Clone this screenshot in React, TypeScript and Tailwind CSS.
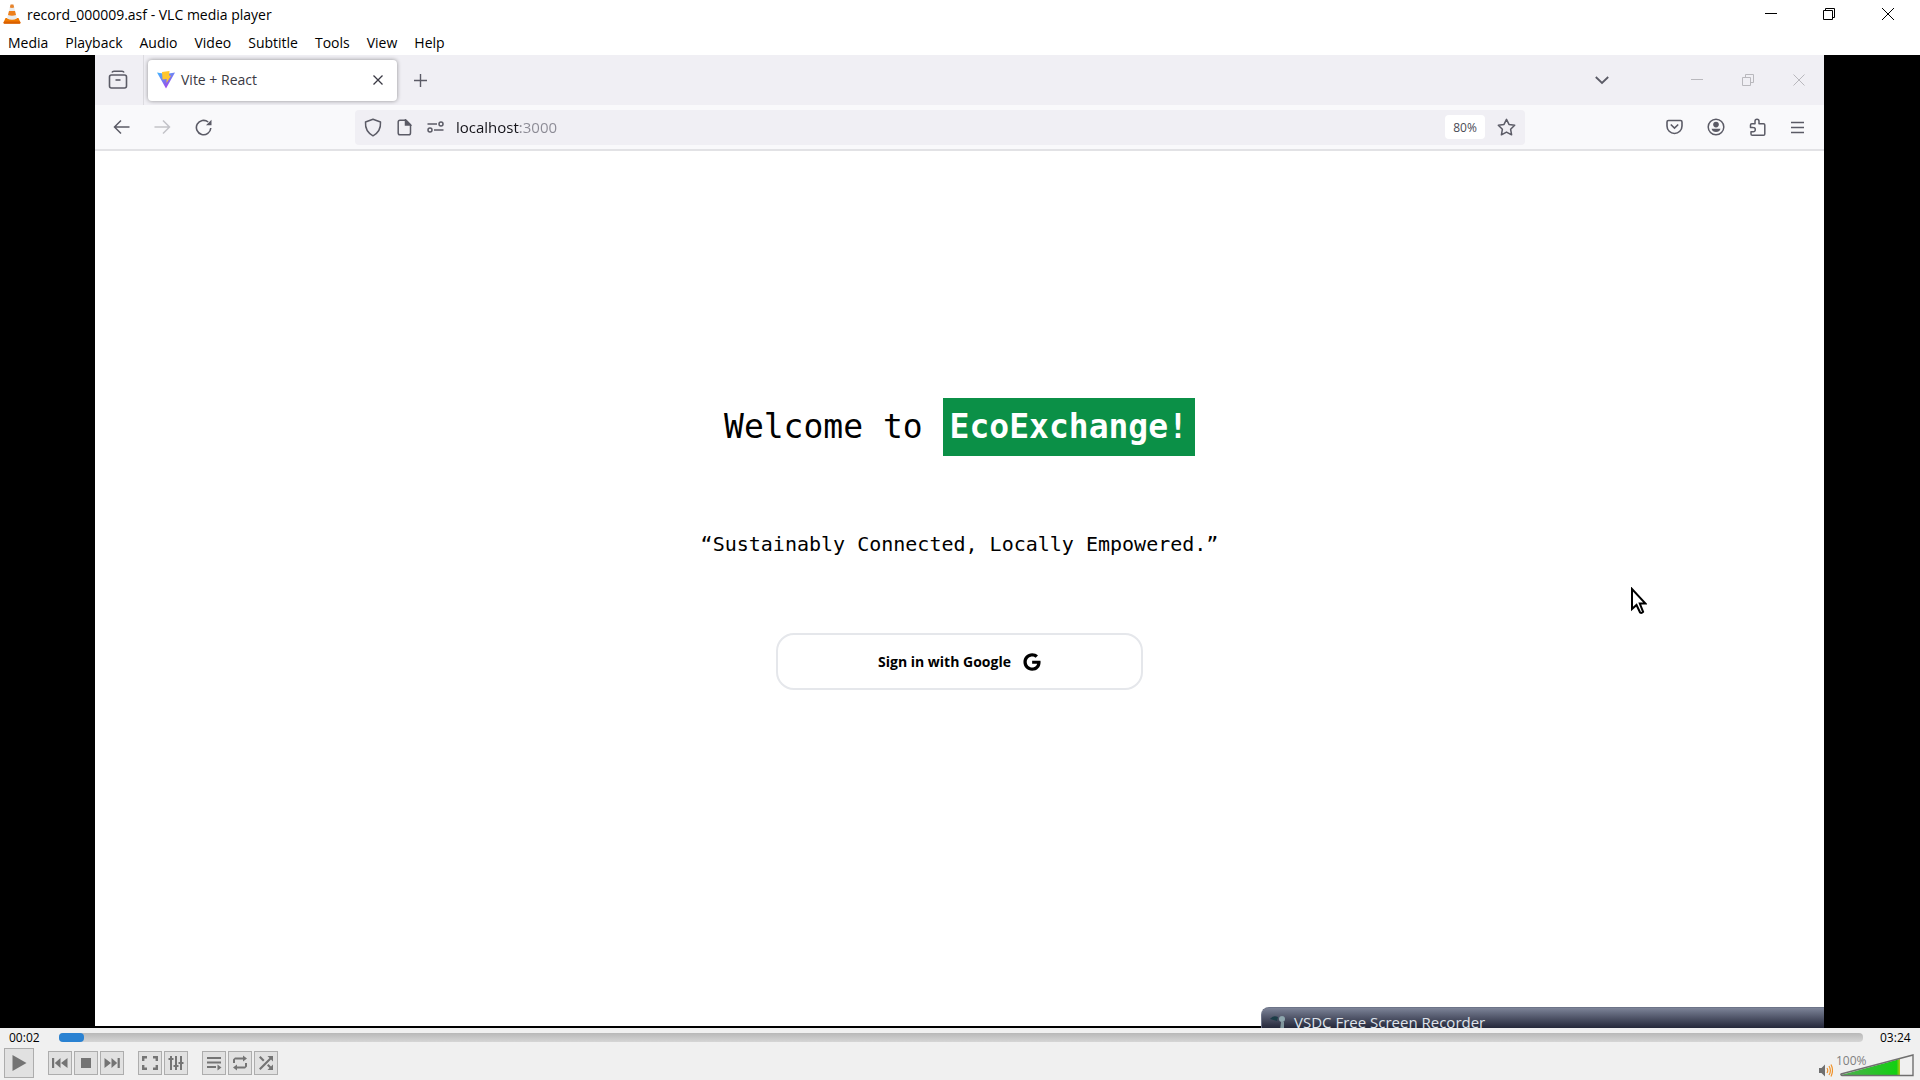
import React from "react";
import { FaGoogle } from "react-icons/fa";

interface ControlButtonProps {
  label: string;
  children: React.ReactNode;
}

const menuItems = [
  "Media",
  "Playback",
  "Audio",
  "Video",
  "Subtitle",
  "Tools",
  "View",
  "Help",
];

const VlcCone = () => (
  <svg width="18" height="20" viewBox="0 0 18 20">
    <path d="M2.5 14h13l2 4.5q0 1-1 1h-15q-1 0-1-1z" fill="#f07a00" />
    <path d="M1 17.5h16l.6 1.4-.8.8H1.2l-.8-.8z" fill="#d95f00" />
    <path d="M7.6.6h2.8L14 14.5q-5 2.5-10 0z" fill="#e9ecee" />
    <path d="M7.6.6h2.8l.8 3q-2.2.8-4.400 0z" fill="#e8852c" />
    <path d="M6 7h6l1 4q-4 1.6-8 0z" fill="#ee7f1a" />
  </svg>
);

const ViteLogo = () => (
  <svg width="18" height="18" viewBox="0 0 18 18">
    <defs>
      <linearGradient id="vite" x1="0" y1="0" x2="0.6" y2="1">
        <stop offset="0" stopColor="#41b8ff" />
        <stop offset="1" stopColor="#a542e8" />
      </linearGradient>
    </defs>
    <path d="M0 1.5 9 3l9-1.5L9 17.5z" fill="url(#vite)" />
    <path d="M5 1 12.500 0l-.5 4.500 2 .2L9.500 12l.2-4-4.200.4z" fill="#ffc62e" />
  </svg>
);

const TitleBar = () => (
  <header className="flex h-7 items-center justify-between bg-white pr-0.5 pl-[3px]">
    <div className="flex items-center gap-1.5">
      <VlcCone />
      <h1 className="pt-0.5 text-[14px] leading-5">
        record_000009.asf - VLC media player
      </h1>
    </div>
    <div className="flex">
      <button aria-label="Minimize" className="flex w-[58px] justify-center">
        <svg width="12" height="12" fill="none" stroke="#000">
          <path d="M0 5.5h12" />
        </svg>
      </button>
      <button aria-label="Restore" className="flex w-[58px] justify-center">
        <svg width="12" height="12" fill="none" stroke="#000">
          <path d="M.5 2.5h9v9h-9zM2.5 2.5v-2h9v9h-2" />
        </svg>
      </button>
      <button aria-label="Close" className="flex w-[60px] justify-center">
        <svg width="12" height="12" fill="none" stroke="#000">
          <path d="m0 0 12 12M12 0 0 12" />
        </svg>
      </button>
    </div>
  </header>
);

const MenuBar = () => (
  <nav className="flex h-[27px] items-center gap-px bg-white pt-0.5">
    {menuItems.map((item) => (
      <button key={item} className="px-2 text-[14px] leading-5">
        {item}
      </button>
    ))}
  </nav>
);

const TabStrip = () => (
  <div className="flex h-[50px] items-center bg-[#f0eff4] text-[#5b5b66]">
    <button
      aria-label="Firefox View"
      className="flex h-full w-[49px] items-center justify-center border-r border-[#dcdbe0] pr-0.5"
    >
      <svg width="20" height="20" viewBox="0 0 20 20" fill="none" stroke="currentColor" strokeWidth="1.6">
        <path d="M4 2.5q.4-1.3 2-1.3h8q1.6 0 2 1.3" />
        <rect x="1.5" y="5" width="17" height="13" rx="2" />
        <path d="M7.5 10h5" />
      </svg>
    </button>
    <div className="ml-1 flex h-[41px] w-[249px] items-center rounded bg-white pr-3 pl-[9px] shadow-[0_0_4px_rgba(0,0,0,0.4)]">
      <ViteLogo />
      <span className="ml-1.5 flex-1 text-[14px] leading-5 text-[#3a3944]">
        Vite + React
      </span>
      <button aria-label="Close tab" className="p-0.5">
        <svg width="10" height="10" viewBox="0 0 10 10" stroke="#3a3944" strokeWidth="1.3">
          <path d="m.5.5 9 9M9.5.5l-9 9" />
        </svg>
      </button>
    </div>
    <button aria-label="New tab" className="ml-[17px]">
      <svg width="13" height="13" viewBox="0 0 13 13" stroke="currentColor" strokeWidth="1.4">
        <path d="M6.5 0v13M0 6.5h13" />
      </svg>
    </button>
    <div className="ml-auto flex items-center text-[#b9b8bd]">
      <button aria-label="List all tabs" className="mr-[62px] text-[#5b5b66]">
        <svg width="14" height="9" viewBox="0 0 14 9" fill="none" stroke="currentColor" strokeWidth="1.8">
          <path d="m.8 1 6.2 6 6.2-6" />
        </svg>
      </button>
      <button aria-label="Minimize browser" className="flex w-[51px] justify-center">
        <svg width="12" height="12" stroke="currentColor">
          <path d="M0 5.5h12" />
        </svg>
      </button>
      <button aria-label="Restore browser" className="flex w-[51px] justify-center">
        <svg width="12" height="12" fill="none" stroke="currentColor">
          <path d="M.5 3.5h8v8h-8zM3.5 3.5v-3h8v8h-3" />
        </svg>
      </button>
      <button aria-label="Close browser" className="flex w-[51px] justify-center">
        <svg width="12" height="12" stroke="currentColor">
          <path d="m.5.5 11 11M11.5.5l-11 11" />
        </svg>
      </button>
    </div>
  </div>
);

const Toolbar = () => (
  <div className="flex h-[46px] items-center border-b-2 border-[#e2e2e5] bg-[#f9f9fb] text-[#5b5b66]">
    <div className="flex w-[260px] items-center gap-6 pl-[18px]">
      <button aria-label="Back">
        <svg width="17" height="16" viewBox="0 0 17 16" fill="none" stroke="currentColor" strokeWidth="1.5">
          <path d="M16.5 8h-15M8 1.5 1.5 8 8 14.5" />
        </svg>
      </button>
      <button aria-label="Forward" className="text-[#c3c3c8]">
        <svg width="17" height="16" viewBox="0 0 17 16" fill="none" stroke="currentColor" strokeWidth="1.5">
          <path d="M.5 8h15M9 1.500 15.500 8 9 14.500" />
        </svg>
      </button>
      <button aria-label="Reload">
        <svg width="17" height="17" viewBox="0 0 17 17" fill="none" stroke="currentColor" strokeWidth="1.6">
          <path d="M15.800 9A7.200 7.200 0 1 1 13.200 3" />
          <path d="M16.500.8v5.500H11z" fill="currentColor" stroke="none" />
        </svg>
      </button>
    </div>
    <div className="flex h-[35px] flex-1 items-center rounded bg-[#f0eff4] pr-[9px] pl-[9px]">
      <div className="flex items-center gap-3.5">
        <svg width="18" height="19" viewBox="0 0 18 19" fill="none" stroke="currentColor" strokeWidth="1.5">
          <path d="M9 1.200 16.500 4q.6 9.500-7.500 13.800Q.9 13.500 1.500 4z" strokeLinejoin="round" />
        </svg>
        <svg width="16" height="17" viewBox="0 0 16 17" fill="none" stroke="currentColor" strokeWidth="1.5">
          <path d="M4 1.200h6l4.500 4.500V14q0 1.800-1.800 1.800H4q-1.800 0-1.800-1.800V3q0-1.800 1.800-1.800z" />
          <path d="M9.500 1v5h5z" fill="currentColor" />
        </svg>
        <svg width="18" height="12" viewBox="-1 0 18 12" fill="none" stroke="currentColor" strokeWidth="1.5">
          <circle cx="14" cy="3" r="2" />
          <circle cx="3" cy="9" r="2" />
          <path d="M.5 3h9.500M7 9h9.500" />
        </svg>
      </div>
      {/* host name is darker than the port */}
      <input
        aria-label="Address"
        defaultValue="localhost:3000"
        className="ml-3 min-w-0 flex-1 bg-linear-to-r from-[#15141a] from-[64px] to-[#8b8a94] to-[64px] bg-clip-text text-[15px] leading-6 text-transparent outline-none"
      />
      <button className="h-6 w-10 rounded bg-white pt-px text-[12px] leading-6 text-[#4a4a55]">
        80%
      </button>
      <button aria-label="Bookmark this page" className="ml-3">
        <svg width="19" height="19" viewBox="0 0 19 19" fill="none" stroke="currentColor" strokeWidth="1.5" strokeLinejoin="round">
          <path d="m9.500 1.300 2.500 5.100 5.700.8-4.100 4 1 5.600-5.100-2.700-5.100 2.700 1-5.600-4.100-4 5.700-.8z" />
        </svg>
      </button>
    </div>
    <div className="flex w-[299px] items-center justify-end gap-6 pr-[19px]">
      <button aria-label="Save to Pocket">
        <svg width="17" height="16" viewBox="0 0 17 16" fill="none" stroke="currentColor" strokeWidth="1.6">
          <path d="M2.500 1.500h12q1.500 0 1.500 1.500v4a7.500 7.500 0 0 1-15 0V3q0-1.500 1.500-1.500z" />
          <path d="m4.800 5.500 3.700 3.600 3.700-3.600" />
        </svg>
      </button>
      <button aria-label="Account">
        <svg width="18" height="18" viewBox="0 0 18 18" fill="currentColor">
          <circle cx="9" cy="9" r="7.8" fill="none" stroke="currentColor" strokeWidth="1.5" />
          <circle cx="9" cy="6.600" r="2.800" />
          <path d="M4.500 10.800h9q-1 3.200-4.500 3.200t-4.500-3.200z" />
        </svg>
      </button>
      <button aria-label="Extensions">
        <svg width="17" height="19" viewBox="0 0 17 19" fill="none" stroke="currentColor" strokeWidth="1.5" strokeLinejoin="round">
          <path d="M1.500 9.500V7q0-1.300 1.300-1.300H6V3.200a2 2 0 0 1 4 0v2.500h4.500q1.300 0 1.300 1.300V16q0 1.300-1.300 1.300H3.300Q2 17.300 2 16v-2.200h2.200a2 2 0 0 0 0-4.200z" />
        </svg>
      </button>
      <button aria-label="Open menu">
        <svg width="15" height="13" viewBox="0 0 15 13" stroke="currentColor" strokeWidth="1.5">
          <path d="M1 1.500h13M1 6.500h13M1 11.500h13" />
        </svg>
      </button>
    </div>
  </div>
);

const WelcomePage = () => (
  <main className="flex flex-1 flex-col items-center bg-white pt-[247px] text-black">
    <h2 className="flex items-center font-['DejaVu_Sans_Mono',monospace] text-[33px] leading-[58px] whitespace-pre">
      {"Welcome to "}
      <span className="bg-[#0b9047] px-[7px] font-bold text-white">
        EcoExchange!
      </span>
    </h2>
    <p className="mt-[72px] font-['DejaVu_Sans_Mono',monospace] text-[20px] leading-8">
      “Sustainably Connected, Locally Empowered.”
    </p>
    <button className="mt-[73px] flex h-[57px] w-[367px] items-center justify-center gap-3 rounded-[18px] border-2 border-[#e5e7eb] text-[14px] leading-5 font-bold">
      Sign in with Google
      <FaGoogle className="size-[18px]" />
    </button>
  </main>
);

const RecorderWindow = () => (
  <div className="absolute right-0 -bottom-0.5 flex h-[21px] w-[563px] items-start gap-2 overflow-hidden rounded-tl-lg border-t border-l border-[#6d7488] bg-linear-to-b from-[#7d8498] to-[#25283a] pt-0.5 pl-2 text-[#dfe3ea]">
    <svg width="16" height="16" viewBox="0 0 16 16" className="mt-1">
      <path d="M0 5q3-4 8-2l-1 4z" fill="#1c3d48" />
      <circle cx="12" cy="5" r="3" fill="#8da6ad" />
      <path d="M11 8h3v8h-4z" fill="#7f959c" />
    </svg>
    <span className="text-[15px] leading-6">VSDC Free Screen Recorder</span>
  </div>
);

const MouseCursor = () => (
  <svg width="17" height="28" viewBox="0 0 17 28" className="absolute top-[532px] right-[177px]">
    <path
      d="M2 2v20l4.500-4 3.600 7.500q1.500 1.200 3-.6L9.800 16.500h5.700z"
      fill="#fff"
      stroke="#000"
      strokeWidth="2"
    />
  </svg>
);

const ControlButton = ({ label, children }: ControlButtonProps) => (
  <button
    aria-label={label}
    className="flex size-6 items-center justify-center border border-[#adadad] bg-[#e1e1e1] text-[#747474]"
  >
    <svg width="18" height="18" viewBox="0 0 18 18" fill="currentColor">
      {children}
    </svg>
  </button>
);

const PlayerControls = () => (
  <footer className="bg-[#f0f0f0]">
    <div className="flex h-5 items-center gap-[17px] pr-[7px] pl-[9px] text-[12px] leading-4">
      <span className="w-[33px]">00:02</span>
      <div className="mb-0.5 h-[9px] flex-1 rounded bg-linear-to-b from-[#b8b8b8] to-[#d6d6d6]">
        <div className="h-full w-[25px] rounded bg-[#2a82d2]" />
      </div>
      <span className="w-[33px]">03:24</span>
    </div>
    <div className="flex h-8 items-center justify-between pr-1.5 pl-1">
      <div className="flex items-center gap-3.5 pb-0.5">
        <button
          aria-label="Play"
          className="flex size-[30px] items-center justify-center border border-[#adadad] bg-[#e1e1e1]"
        >
          <svg width="16" height="18" viewBox="0 0 16 18" fill="#747474">
            <path d="M1.500 1v16L15.500 9z" />
          </svg>
        </button>
        <div className="flex gap-0.5">
          <ControlButton label="Previous">
            <path d="M1 4h2.200v10H1zM9.500 4v10L3.800 9zM16.500 4v10L10 9z" />
          </ControlButton>
          <ControlButton label="Stop">
            <path d="M4 4h10v10H4z" />
          </ControlButton>
          <ControlButton label="Next">
            <path d="M16.800 4h-2.200v10h2.200zM8.500 4v10l5.700-5zM1.500 4v10L8 9z" />
          </ControlButton>
        </div>
        <div className="flex gap-0.5">
          <ControlButton label="Fullscreen">
            <path d="M1 2h5v2.400H3.400V7H1zM12 2h5v5h-2.400V4.400H12zM1 11h2.400v2.600H6V16H1zM14.600 11H17v5h-5v-2.400h2.600z" />
          </ControlButton>
          <ControlButton label="Extended settings">
            <path d="M3 2h2v14H3zM8 2h2v14H8zM13 2h2v14h-2zM1.500 4h5v2h-5zM6.500 11h5v2h-5zM11.500 8h5v2h-5z" />
          </ControlButton>
        </div>
        <div className="flex gap-0.5">
          <ControlButton label="Playlist">
            <path d="M2 3h14v2H2zM2 7.500h14v2H2zM2 12h9v2H2zM12.500 10.500v6l4-3z" />
          </ControlButton>
          <ControlButton label="Loop">
            <path d="M2 9V5.500L4 3.500h8V1.500l4 3-4 3v-2H4V9zM16 9v3.500l-2 2H6v2l-4-3 4-3v2h8V9z" />
          </ControlButton>
          <ControlButton label="Random">
            <path d="M2 3.500 3.500 2l4 4L6 7.500zM10 11.500l1.500-1.500 2.500 2.500 2-2V16h-5.500l2-2zM2 14.500 12.500 4l-2-2H16v5.500l-2-2L3.500 16z" />
          </ControlButton>
        </div>
      </div>
      <div className="flex items-end gap-[7px] self-end pb-[3px]">
        <button aria-label="Mute">
          <svg width="14" height="13" viewBox="0 0 14 13">
            <path d="M0 4h2.500L6 .5v12L2.500 9H0z" fill="#6f6f6f" />
            <path d="M8 4q1.500 2.500 0 5M10 2q2.800 4.500 0 9M12 .5q3 6 0 12" fill="none" stroke="#f0932b" strokeWidth="1.2" />
          </svg>
        </button>
        <div className="relative">
          <svg width="74" height="23" viewBox="0 0 74 23" className="block">
            <defs>
              <linearGradient id="volume">
                <stop offset="0" stopColor="#4fae4f" />
                <stop offset="0.94" stopColor="#12d012" />
                <stop offset="1" stopColor="#b5c814" />
              </linearGradient>
            </defs>
            <path d="M1 21 60 5v16z" fill="url(#volume)" />
            <path d="M1 20 73 1v20.500H2q-1.500-.5-1-1.500z" fill="none" stroke="#6f6f6f" strokeWidth="1.4" />
          </svg>
          <span className="absolute -top-px -left-1 text-[12px] leading-4 text-[#808080]">
            100%
          </span>
        </div>
      </div>
    </div>
  </footer>
);

const App = () => (
  <div className="flex min-h-screen flex-col bg-black font-['Open_Sans','Noto_Sans',sans-serif] text-black">
    <TitleBar />
    <MenuBar />
    <div className="relative mr-24 ml-[95px] flex flex-1 flex-col border-b-2 border-black">
      <TabStrip />
      <Toolbar />
      <WelcomePage />
      <MouseCursor />
      <RecorderWindow />
    </div>
    <PlayerControls />
  </div>
);

export default App;
